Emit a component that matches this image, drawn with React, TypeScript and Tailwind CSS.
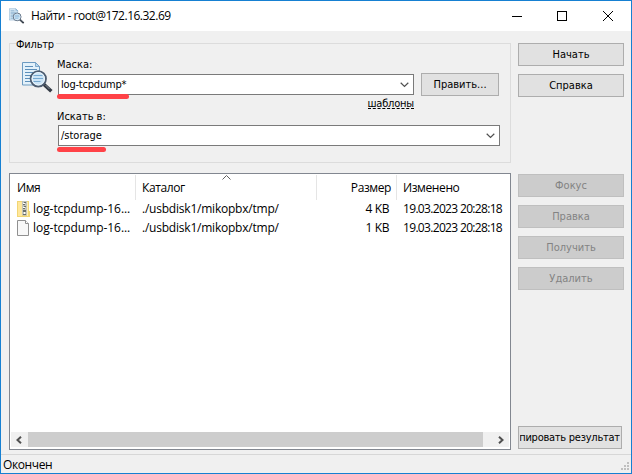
import React from "react";

const ui = "font-['DejaVu_Sans_Condensed','DejaVu_Sans',sans-serif] [font-stretch:condensed] text-[11px]";
const segoe = "font-['Open_Sans','Noto_Sans',sans-serif] [font-stretch:normal] text-[12px]";

function SearchDoc({ className }: { className: string }) {
  return (
    <svg className={className} viewBox="0 0 32 32" fill="none">
      <path d="M.5 1.5h13l4 4V24H.5z" fill="#e3f1fa" stroke="#6d9bc1" />
      <path d="M13.5 1.5v4h4z" fill="#b8d8ee" stroke="#6d9bc1" strokeWidth=".8" />
      <path d="M3 5.5h8M3 8.5h12M3 11.5h8M3 14.5h7M3 17.5h6M3 20.5h8" stroke="#5c8fba" strokeWidth="1.2" />
      <path d="m22.5 24 5.5 5" stroke="#343b45" strokeWidth="3.6" strokeLinecap="square" />
      <path d="m23.5 24 4 4" stroke="#8993a0" strokeWidth="1" />
      <circle cx="16.3" cy="17.8" r="7.7" fill="#cce4f6" stroke="#4d5c70" strokeWidth="1.8" />
      <circle cx="16.3" cy="17.8" r="6.2" stroke="#edf7fd" strokeWidth="1" />
      <path d="M11.5 14.5h9M11 17.5h10M11.5 20.5h7" stroke="#77a9d0" strokeWidth="1.2" />
    </svg>
  );
}

function Chevron() {
  return (
    <svg className="mr-[4px] h-[6px] w-[9px] shrink-0" viewBox="0 0 9 6" fill="none">
      <path d="m.7.8 3.8 3.7L8.3.8" stroke="#505050" strokeWidth="1.2" />
    </svg>
  );
}

function Combo({ value, className }: { value: string; className: string }) {
  return (
    <div className={`flex h-[21px] items-center justify-between border border-[#7a7a7a] bg-white pl-[2px] ${className}`}>
      <span className="leading-[19px]">{value}</span>
      <Chevron />
    </div>
  );
}

function Button({ label, disabled = false, width = "w-[106px]", spacing = "" }: { label: string; disabled?: boolean; width?: string; spacing?: string }) {
  return (
    <button
      disabled={disabled}
      className={`flex h-[23px] shrink-0 items-center justify-center border px-px pt-px ${width} ${spacing} ${disabled ? "border-[#bfbfbf] bg-[#cccccc] text-[#838383]" : "border-[#adadad] bg-[#e1e1e1] text-black"}`}
    >
      <span className="flex justify-center overflow-hidden whitespace-nowrap">{label}</span>
    </button>
  );
}

function ZipIcon() {
  return (
    <svg className="h-4 w-[14px] shrink-0" viewBox="0 0 14 16">
      <path d="M0 0h12v10h1v6H0z" fill="#f2d675" />
      <path d="M1 1h4v14H1z" fill="#ffe79b" />
      <path d="M10 1h1v14h-1z" fill="#fff0b5" />
      <path d="M5 0h5v14l-2 1-3-1z" fill="#c4c4ba" />
      <path d="M7 1h2v1H7zM6 3h2v1H6zM7 5h2v1H7zM6 7h2v1H6zM6 9h3v2H6zM6 13h3v1H6z" fill="#6a6e6c" />
      <path d="M6 2h2v1H6zM6 6h2v1H6zM7 11h1v2H7z" fill="#fff" />
    </svg>
  );
}

function FileIcon() {
  return (
    <svg className="h-4 w-[14px] shrink-0" viewBox="0 0 14 16">
      <path d="M.5.5h8l3 3v12H.5z" fill="#f8f8f8" stroke="#909090" />
      <path d="M8.5.5v3h3" fill="#fff" stroke="#909090" />
    </svg>
  );
}

const rows = [
  { icon: <ZipIcon />, size: "4 KB" },
  { icon: <FileIcon />, size: "1 KB" },
];

export default function App() {
  return (
    <div className={`flex h-[474px] w-[632px] flex-col overflow-hidden border border-[#1680d2] bg-[#f0f0f0] text-black ${ui}`}>
      <header className={`flex h-[30px] shrink-0 items-center bg-white pl-2 ${segoe}`}>
        <SearchDoc className="h-4 w-4" />
        <h1 className="ml-[6px] whitespace-nowrap tracking-[-0.5px]">Найти - root@172.16.32.69</h1>
        <svg className="ml-auto mr-[18px] h-[10px] w-[101px]" viewBox="0 0 101 10" fill="none" shapeRendering="crispEdges">
          <path d="M0 5.5h10M45.5.5h9v9h-9z" stroke="#000" />
          <path d="m91 0 10 10M101 0 91 10" stroke="#000" shapeRendering="auto" />
        </svg>
      </header>

      <main className="flex min-h-0 flex-1 pl-2">
        <div className="flex w-[502px] flex-col pt-[12px]">
          <section className="h-[120px] shrink-0 border border-[#dcdcdc] px-[6px]">
            <div className="-mt-[8px] flex h-[16px]">
              <h2 className="bg-[#f0f0f0] pr-[2px] leading-[18px] tracking-[-0.2px]">Фильтр</h2>
            </div>
            <div className="flex">
              <SearchDoc className="ml-[6px] mt-[9px] h-8 w-8" />
              <div className="ml-[4px] w-[442px] pt-[4px]">
                <label className="-ml-px block h-[17px] leading-[18px]">Маска:</label>
                <div className="flex h-[23px] items-center justify-between">
                  <div className="relative">
                    <Combo value="log-tcpdump*" className="w-[356px] tracking-[-0.2px]" />
                    <span className="absolute -left-px top-5 h-[5px] w-[72px] rounded-full bg-[#ff4247]" />
                  </div>
                  <div className="mr-px">
                    <Button label="Править..." width="w-[78px]" />
                  </div>
                </div>
                <div className="flex h-[13px] w-[356px] justify-end">
                  <span className="h-[13px] border-b border-dashed border-black leading-[15px] tracking-[-0.2px]">шаблоны</span>
                </div>
                <label className="-ml-px block h-[16px] leading-[15px]">Искать в:</label>
                <div className="relative">
                  <Combo value="/storage" className="w-[442px]" />
                  <span className="absolute -left-px top-[22px] h-[5px] w-[49px] rounded-full bg-[#ff4247]" />
                </div>
              </div>
            </div>
          </section>

          <section className={`mt-[10px] flex h-[277px] shrink-0 flex-col border border-[#828790] bg-white ${segoe}`}>
            <div className="grid h-[25px] shrink-0 grid-cols-[126px_181px_80px_1fr] leading-[25px] tracking-[-0.4px]">
              <span className="mt-px border-r border-[#e5e5e5] pl-[7px]">Имя</span>
              <span className="relative mt-px border-r border-[#e5e5e5] pl-[6px]">
                Каталог
                <svg className="absolute left-[86px] top-0 h-[5px] w-[9px]" viewBox="0 0 9 5" fill="none">
                  <path d="m.5 4.5 4-4 4 4" stroke="#606060" />
                </svg>
              </span>
              <span className="mt-px border-r border-[#e5e5e5] pr-[5px] text-right">Размер</span>
              <span className="mt-px pl-[6px]">Изменено</span>
            </div>
            {rows.map((row) => (
              <div key={row.size} className="grid h-[19px] shrink-0 grid-cols-[126px_181px_80px_1fr] whitespace-nowrap leading-[19px]">
                <div className="flex items-center pl-[7px]">
                  {row.icon}
                  <span className="ml-[2px] tracking-[-0.06px]">log-tcpdump-16...</span>
                </div>
                <span className="pl-[6px] tracking-[-0.22px]">./usbdisk1/mikopbx/tmp/</span>
                <span className="pr-[8px] text-right tracking-[-0.4px]">{row.size}</span>
                <span className="pl-[6px] tracking-[-0.67px]">19.03.2023 20:28:18</span>
              </div>
            ))}
            <div className="mx-px mb-[2px] mt-auto flex h-[15px] items-center bg-[#f0f0f0]">
              <svg className="ml-[5px] h-[8px] w-[6px]" viewBox="0 0 6 8" fill="none">
                <path d="M5 .8 1.5 4 5 7.2" stroke="#505050" strokeWidth="2" />
              </svg>
              <div className="ml-[6px] h-full w-[455px] bg-[#cdcdcd]" />
              <svg className="ml-[15px] h-[8px] w-[6px]" viewBox="0 0 6 8" fill="none">
                <path d="M1 .8 4.5 4 1 7.2" stroke="#505050" strokeWidth="2" />
              </svg>
            </div>
          </section>
        </div>

        <aside className="ml-[7px] flex w-[106px] flex-col pb-[5px] pt-[12px]">
          <div className="flex flex-col gap-2">
            <Button label="Начать" />
            <Button label="Справка" />
          </div>
          <div className="mt-[77px] flex flex-col gap-2">
            <Button label="Фокус" disabled />
            <Button label="Правка" disabled />
            <Button label="Получить" disabled />
            <Button label="Удалить" disabled />
          </div>
          <div className="mt-auto">
            <Button label="Копировать результаты" width="w-[104px]" spacing="tracking-[-0.25px] [&>span]:pr-[6px]" />
          </div>
        </aside>
      </main>

      <footer className={`flex h-[19px] shrink-0 items-center justify-between border-t border-[#d7d7d7] pl-[2px] ${segoe}`}>
        <span className="pt-px tracking-[-0.4px]">Окончен</span>
        <svg className="mr-[2px] mt-[4px] h-[8px] w-[8px]" viewBox="0 0 8 8" fill="#bfbfbf" shapeRendering="crispEdges">
          <path d="M6 0h2v2H6zM3 3h2v2H3zM6 3h2v2H6zM0 6h2v2H0zM3 6h2v2H3zM6 6h2v2H6z" />
        </svg>
      </footer>
    </div>
  );
}
